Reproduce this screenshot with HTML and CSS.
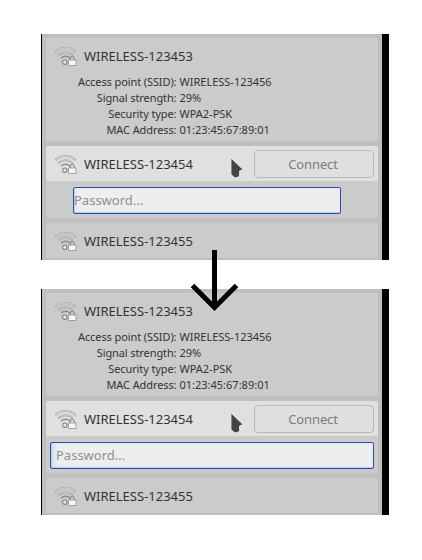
FILE: index.html
```html
<html lang="en">
<head>
  <meta charset="UTF-8">
  <title>Wireless networks</title>
  <link rel="stylesheet" href="styles.css">
</head>
<body>
  <svg width="0" height="0" class="defs">
    <symbol id="wifi" viewBox="0 0 22 20">
      <g fill="none" stroke-linecap="round">
        <path d="M1.2 5.5C6 .8 15 .8 19.8 5.5" stroke="#9c9c9c" stroke-width="2.2"/>
        <path d="M1.2 5.5C6 .8 15 .8 19.8 5.5" stroke="#e2e2e2" stroke-width="1"/>
        <path d="M4 8.8C7.5 5.3 13.5 5.3 17 8.8" stroke="#9c9c9c" stroke-width="2"/>
        <path d="M4 8.8C7.5 5.3 13.5 5.3 17 8.8" stroke="#dedede" stroke-width=".8"/>
        <path d="M6.5 11.8C8.7 9.8 12.3 9.8 14.5 11.8" stroke="#8a8a8a" stroke-width="1.4"/>
      </g>
      <circle cx="9.8" cy="16.2" r="2.2" fill="#e8e8e8" stroke="#828282" stroke-width="1.1"/>
      <rect x="13.6" y="14" width="7.4" height="5.6" fill="#f8f8f8" stroke="#939393" stroke-width=".8"/>
      <path d="M15.3 14v-1.7a2 2 0 0 1 4 0V14" fill="none" stroke="#808080" stroke-width="1"/>
    </symbol>
    <symbol id="cursor" viewBox="0 0 14 22">
      <path d="M1 1L13 12.5L9.5 14L9.5 19.5L5 21L1 17.5Z" fill="#444" stroke="#eee" stroke-width=".8"/>
    </symbol>
  </svg>

  <div class="page">
    <div class="panel">
      <div class="net">
        <div class="net-head">
          <svg class="wifi"><use href="#wifi"/></svg>
          <span>WIRELESS-123453</span>
        </div>
        <div class="details">
          <span class="key">Access point (SSID):</span><span>WIRELESS-123456</span>
          <span class="key">Signal strength:</span><span>29%</span>
          <span class="key">Security type:</span><span>WPA2-PSK</span>
          <span class="key">MAC Address:</span><span>01:23:45:67:89:01</span>
        </div>
      </div>
      <div class="net">
        <div class="net-head active">
          <svg class="wifi"><use href="#wifi"/></svg>
          <span>WIRELESS-123454</span>
          <button class="connect">Connect</button>
        </div>
        <div class="pass-row short">
          <input type="text" class="pass" placeholder="Password...">
        </div>
      </div>
      <div class="net">
        <div class="net-head">
          <svg class="wifi"><use href="#wifi"/></svg>
          <span>WIRELESS-123455</span>
        </div>
      </div>
      <svg class="cursor"><use href="#cursor"/></svg>
    </div>

    <div class="panel">
      <div class="net">
        <div class="net-head">
          <svg class="wifi"><use href="#wifi"/></svg>
          <span>WIRELESS-123453</span>
        </div>
        <div class="details">
          <span class="key">Access point (SSID):</span><span>WIRELESS-123456</span>
          <span class="key">Signal strength:</span><span>29%</span>
          <span class="key">Security type:</span><span>WPA2-PSK</span>
          <span class="key">MAC Address:</span><span>01:23:45:67:89:01</span>
        </div>
      </div>
      <div class="net">
        <div class="net-head active">
          <svg class="wifi"><use href="#wifi"/></svg>
          <span>WIRELESS-123454</span>
          <button class="connect">Connect</button>
        </div>
        <div class="pass-row wide">
          <input type="text" class="pass" placeholder="Password...">
        </div>
      </div>
      <div class="net">
        <div class="net-head">
          <svg class="wifi"><use href="#wifi"/></svg>
          <span>WIRELESS-123455</span>
        </div>
      </div>
      <svg class="cursor"><use href="#cursor"/></svg>
    </div>

    <svg class="arrow" viewBox="0 0 50 62">
      <path d="M24.5 0V57.5M2.5 35.5L24.5 57.5L46.5 35.5" fill="none" stroke="#000" stroke-width="5"/>
    </svg>
  </div>
</body>
</html>
```

FILE: styles.css
```css
body {
  margin: 0;
  background-color: #fff;
  font-family: "Noto Sans", sans-serif;
  color: #333;
}
.defs {
  position: absolute;
}
.page {
  position: relative;
  display: flex;
  flex-direction: column;
  gap: 29px;
  width: 348px;
  margin-left: 41px;
  padding-top: 34px;
}
.panel {
  position: relative;
  display: flex;
  flex-direction: column;
  gap: 5px;
  box-sizing: border-box;
  height: 226px;
  padding: 4px 4px 2px 4px;
  background-color: #bfbfbf;
  border-left: 1px solid #000;
  border-right: 7px solid #000;
}
.net {
  background-color: #cbcbcb;
  border-radius: 2px;
}
.net-head {
  display: flex;
  align-items: center;
  height: 35px;
  padding: 0 4px 0 9px;
  font-size: 13px;
}
.net-head.active {
  background-color: #e0e0e0;
  border-radius: 2px 2px 0 0;
}
.wifi {
  width: 22px;
  height: 20px;
  margin-right: 7px;
}
.details {
  display: grid;
  grid-template-columns: auto 1fr;
  column-gap: 3px;
  padding: 0 0 3px 32px;
  margin-top: 1px;
  font-size: 11px;
  line-height: 16px;
}
.key {
  text-align: right;
  letter-spacing: -.1px;
}
.connect {
  width: 120px;
  height: 28px;
  margin-left: auto;
  padding: 0 2px 0 0;
  font-family: "Noto Sans", sans-serif;
  font-size: 13px;
  letter-spacing: -.1px;
  color: #7c7c7c;
  background-color: #dfdfdf;
  border: 1px solid #b8b8b8;
  border-radius: 4px;
}
.pass-row {
  display: flex;
  height: 37px;
  box-sizing: border-box;
  padding-top: 6px;
}
.pass-row.short {
  padding-left: 27px;
  padding-right: 37px;
}
.pass-row.wide {
  padding-left: 4px;
  padding-right: 4px;
}
.pass {
  flex: 1;
  height: 27px;
  box-sizing: border-box;
  padding: 0 0 2px 0;
  font-family: "Noto Sans", sans-serif;
  font-size: 13px;
  background-color: #eeeeee;
  border: 1px solid #2a4fa8;
  border-radius: 2px;
  box-shadow: inset 0 -1px 1px #b4cdea, inset 1px 0 1px #b4cdea;
}
.wide .pass {
  padding-left: 5px;
  background-image: linear-gradient(to right, #d3deec, #eeeeee 8px);
}
.pass::placeholder {
  color: #8f8f8f;
}
.cursor {
  position: absolute;
  left: 188px;
  top: 123px;
  width: 14px;
  height: 22px;
}
.arrow {
  position: absolute;
  left: 149px;
  top: 250px;
  width: 50px;
  height: 62px;
}
```
